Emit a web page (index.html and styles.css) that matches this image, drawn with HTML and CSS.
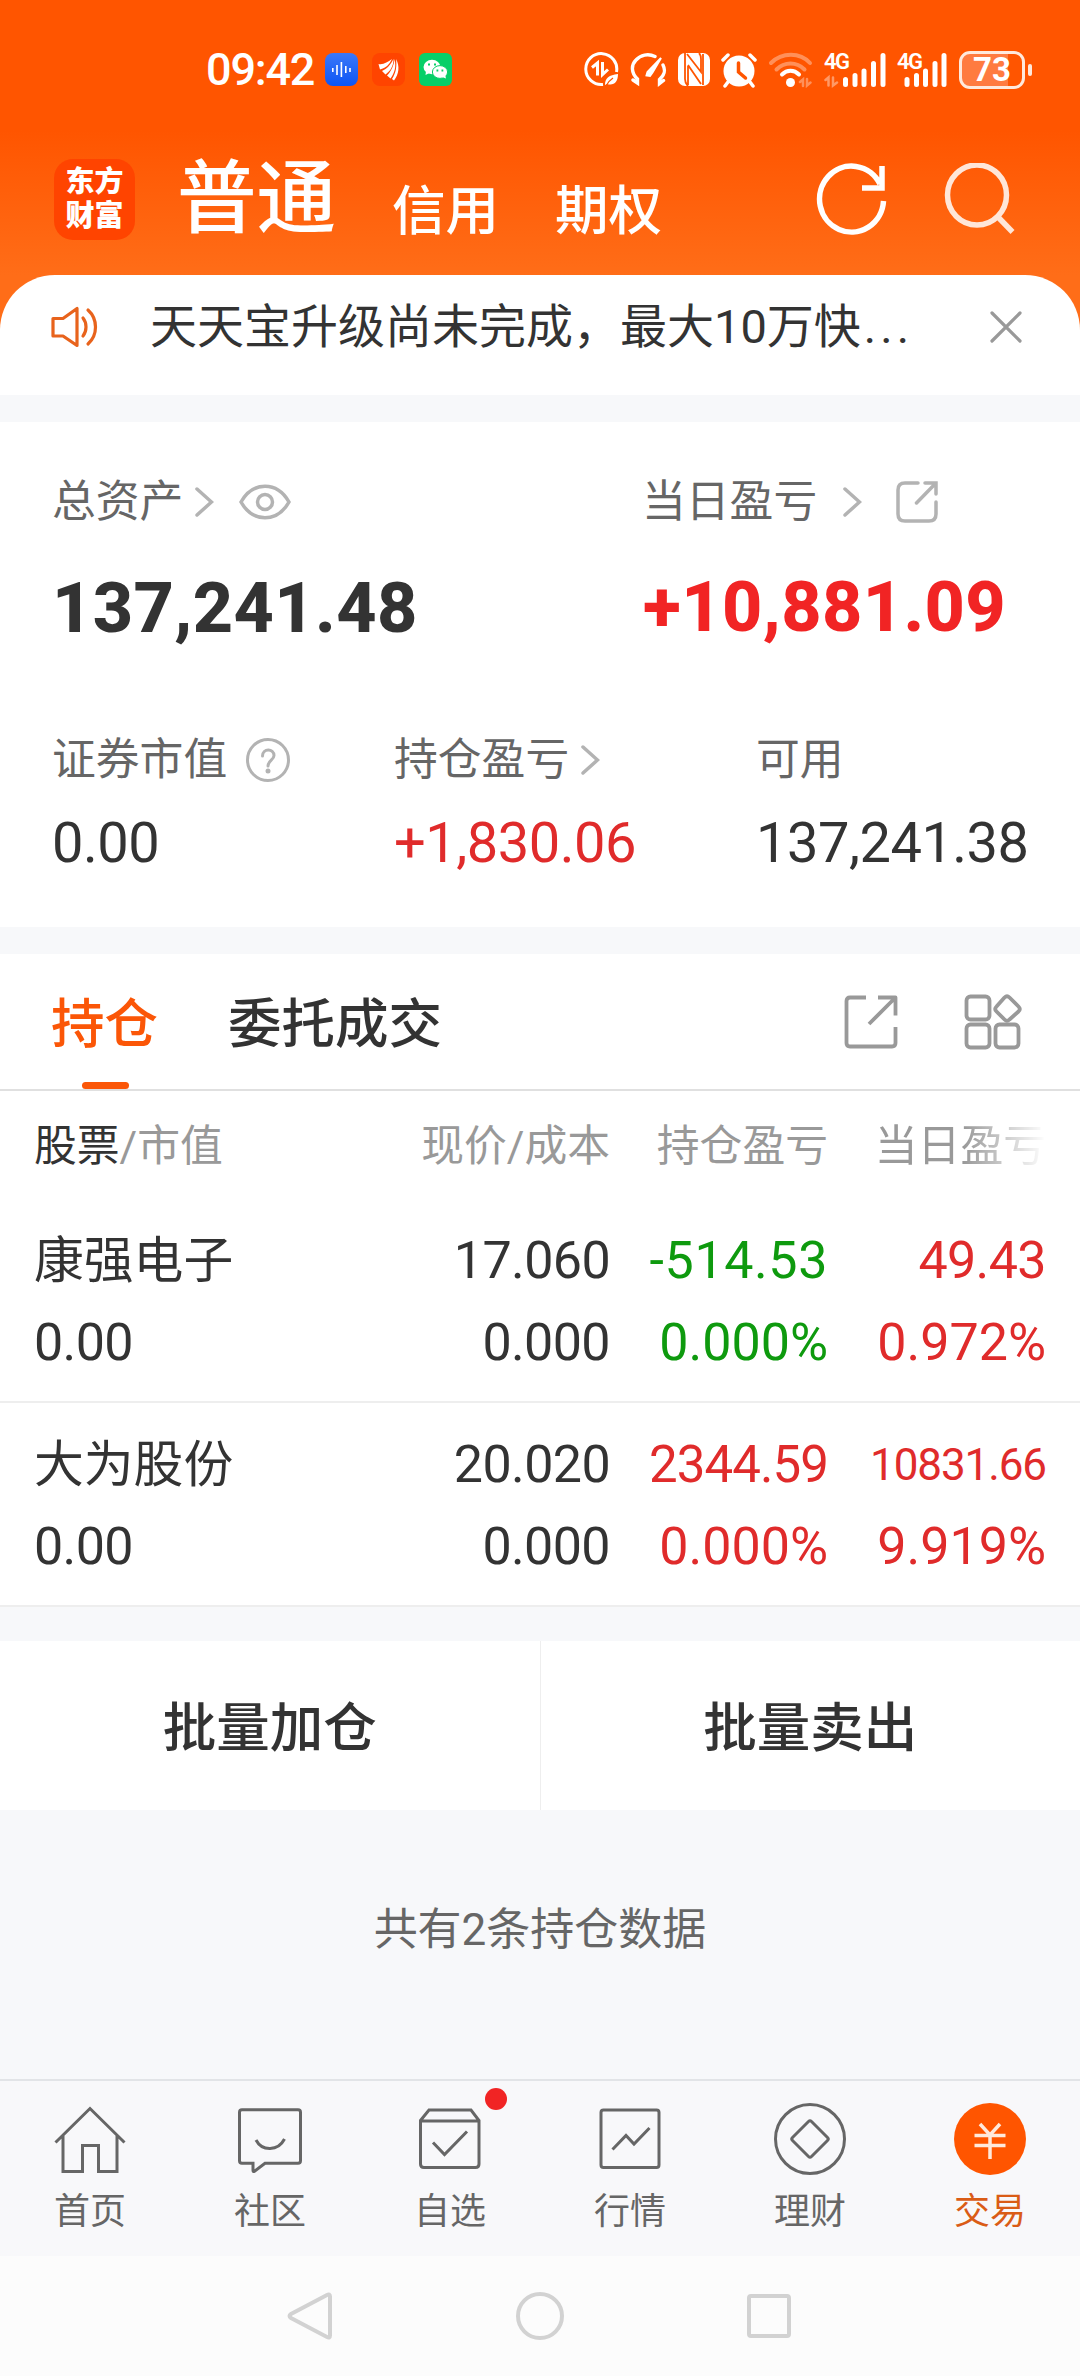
FILE: index.html
```html
<!DOCTYPE html>
<html lang="zh-CN">
<head>
	<meta charset="UTF-8">
	<title>交易</title>
	<link rel="stylesheet" href="styles.css">
</head>
<body>
	<div class="header">
		<div class="status">
			<span class="time">09:42</span>
			<div class="apps">
				<svg width="33" height="33" viewBox="0 0 33 33">
					<defs><linearGradient id="blue" x1="0" y1="0" x2="0" y2="1"><stop offset="0" stop-color="#3b78f8"/><stop offset="1" stop-color="#0c55f5"/></linearGradient></defs>
					<rect width="33" height="33" rx="8" fill="url(#blue)"/>
					<path d="M7.8 15v4M12 12v10M16.4 9v15M20.8 13v7M25 15v4" stroke="#fff" stroke-width="1.6"/>
				</svg>
				<svg width="33" height="33" viewBox="0 0 33 33">
					<rect width="33" height="33" rx="8" fill="#ff4400"/>
					<path d="M6.500 11c5 1 9-2 13.500-5-3 6-6 9-12 10.500zM10 18c5-2 9-7 11.500-12 0 7-3 12-8 15.500zM15 22.500c4-4 7-10 7.500-16.500 2 8 0 14-4 19.500zM20 26c4-6 5-13 4-20 4 7 3 15-2 21.500z" fill="#fff"/>
				</svg>
				<svg width="33" height="33" viewBox="0 0 33 33">
					<rect width="33" height="33" rx="6" fill="#07cf68"/>
					<ellipse cx="13" cy="14" rx="8.5" ry="7.2" fill="#fff"/>
					<path d="M7 18l-.5 4 4-2z" fill="#fff"/>
					<ellipse cx="21" cy="19" rx="7.6" ry="6.4" fill="#fff" stroke="#07cf68" stroke-width="1"/>
					<path d="M23 24l4 1.500-1-4z" fill="#fff"/>
					<path d="M9 11.500h2M15 11.500h2M17.500 17.500h1.800M22.500 17.500h1.800" stroke="#07cf68" stroke-width="2"/>
				</svg>
			</div>
			<div class="sys">
				<svg width="35" height="35" viewBox="0 0 35 35" fill="none" stroke="#fff" stroke-width="3">
					<path d="M19 32.500A15.500 15.500 0 1 1 32.500 20"/>
					<path d="M8 15.500l5.500-4.500v12.500M18.500 10v12.500l5.500-5" stroke-width="3"/>
					<path d="M21 33c0-7 4-10 13-11 0 8-4 12-11 10z" fill="#fff" stroke="none"/>
					<path d="M22 34c2-4 4-6 7-8" stroke="#ff5500" stroke-width="1.300"/>
				</svg>
				<svg width="37" height="35" viewBox="0 0 37 35" fill="none" stroke="#fff" stroke-width="3.400" stroke-linecap="round">
					<path d="M3 28l4.500 3v-4C1 21 1 13 6 8 10.500 3 18 1 25 4.500M33 13c3 6 1.500 10-3.500 14.500v4l4-3"/>
					<path d="M31 6L17.500 20l-1 3.500 3.500.5 2.500-3.500z" fill="#fff" stroke-width="2"/>
				</svg>
				<svg width="32" height="33" viewBox="0 0 32 33">
					<rect x="0" y="0" width="32" height="33" rx="7" fill="#fff"/>
					<path d="M7 0v26q0 4 3 7M10 13v19M10 12l13 19M9 1l14 18V6q0-4-2-6M25 1v31" fill="none" stroke="#ff5500" stroke-width="1.800"/>
				</svg>
				<svg width="36" height="36" viewBox="0 0 36 36" fill="none" stroke="#fff" stroke-width="3.500" stroke-linecap="round">
					<circle cx="18" cy="19" r="15.500" fill="#fff" stroke="none"/>
					<path d="M2 8l5-5M34 8l-5-5M7 30l-3 4M29 30l3 4"/>
					<path d="M17.500 11v9l7 6" stroke="#ff5500"/>
				</svg>
				<svg class="wifi" width="46" height="36" viewBox="0 0 46 36" fill="none" stroke="#fff" stroke-width="4" stroke-linecap="round">
					<path d="M3 11c11-11 29-11 39 0M8.500 17.500c8-8 20-8 28 0" opacity=".35"/>
					<path d="M14 22.500c5-5 12-5 17 0"/>
					<circle cx="22.500" cy="30.500" r="4.500" fill="#fff" stroke="none"/>
					<path d="M32 30l3-2.500v6.500M39 27v6.500l3.500-3" opacity=".35" stroke-width="2.500"/>
				</svg>
				<div class="signal">
					<span class="net">4G</span>
					<svg width="62" height="36" viewBox="0 0 62 36" fill="none" stroke="#fff" stroke-width="5" stroke-linecap="round">
						<path d="M21.500 27.500v5M31 23.500v9M40 19v13.500M49.500 11.500v21M59 3.500v29"/>
						<path d="M1.500 28l3-2.500v8M9 25.500v8l4-3" opacity=".4" stroke-width="2.500"/>
					</svg>
				</div>
				<div class="signal">
					<span class="net">4G</span>
					<svg width="50" height="36" viewBox="0 0 50 36" fill="none" stroke="#fff" stroke-width="5" stroke-linecap="round">
						<path d="M10 27.500v5M19.500 23.500v9M28.500 19v13.500M38 11.500v21M47 3.500v29"/>
					</svg>
				</div>
				<div class="battery"><span>73</span></div>
			</div>
		</div>
		<div class="nav">
			<div class="logo">东方<br>财富</div>
			<span class="nav-on">普通</span>
			<span class="nav-item">信用</span>
			<span class="nav-item">期权</span>
			<svg class="refresh" width="72" height="72" viewBox="0 0 72 72" fill="none" stroke="#fff" stroke-width="5.500">
				<path d="M67.500 38A32 33 0 1 1 64 21M66 3v22H46"/>
			</svg>
			<svg width="72" height="72" viewBox="0 0 72 72" fill="none" stroke="#ffe6d8" stroke-width="5.500">
				<ellipse cx="33" cy="32" rx="29.500" ry="30"/>
				<path d="M53 53l15.500 16"/>
			</svg>
		</div>
	</div>

	<div class="notice">
		<svg width="48" height="42" viewBox="0 0 48 42" fill="none" stroke="#e8631c" stroke-width="3.200" stroke-linejoin="round" stroke-linecap="round">
			<path d="M2 12.500h10L26 2.500v37L12 30H2zM26 3v36M32 12c4 5 4 13 0 18M37 4c10 9 10 25 0 34"/>
		</svg>
		<p>天天宝升级尚未完成，最大10万快<span class="more">...</span></p>
		<svg class="close" width="32" height="32" viewBox="0 0 32 32" fill="none" stroke="#999" stroke-width="3.200" stroke-linecap="round">
			<path d="M2 2l28 28M30 2L2 30"/>
		</svg>
	</div>

	<div class="assets">
		<div class="total">
			<div class="item">
				<div class="label">总资产
					<svg class="arrow" width="19" height="30" viewBox="0 0 19 30"><path d="M2 2l14.500 13L2 28"/></svg>
					<svg class="eye" width="52" height="36" viewBox="0 0 52 36"><path d="M2 18C14-3 38-3 50 18 38 39 14 39 2 18z"/><circle cx="26" cy="18" r="7.500"/></svg>
				</div>
				<div class="big">137,241.48</div>
			</div>
			<div class="item">
				<div class="label">当日盈亏
					<svg class="arrow far" width="19" height="30" viewBox="0 0 19 30"><path d="M2 2l14.500 13L2 28"/></svg>
					<svg class="share" width="42" height="42" viewBox="0 0 42 42"><path d="M22 2H9Q2 2 2 9v24q0 7 7 7h24q7 0 7-7V21M29 2h11v11M39 3L20.500 22"/></svg>
				</div>
				<div class="big red">+10,881.09</div>
			</div>
		</div>
		<div class="detail">
			<div class="item">
				<div class="label">证券市值
					<svg class="ask" width="44" height="44" viewBox="0 0 44 44"><circle cx="22" cy="22" r="20.500"/><path d="M16.500 18c0-8 11.500-8 11.500-.5 0 4.500-6 5-6 10.500"/><circle class="dot" cx="22" cy="33" r="2.500"/></svg>
				</div>
				<div class="num">0.00</div>
			</div>
			<div class="item">
				<div class="label">持仓盈亏
					<svg class="arrow" width="19" height="30" viewBox="0 0 19 30"><path d="M2 2l14.500 13L2 28"/></svg>
				</div>
				<div class="num red">+1,830.06</div>
			</div>
			<div class="item">
				<div class="label">可用</div>
				<div class="num">137,241.38</div>
			</div>
		</div>
	</div>

	<div class="tabs">
		<span class="tab on">持仓</span>
		<span class="tab">委托成交</span>
		<svg class="tool-share" width="54" height="54" viewBox="0 0 54 54"><path d="M22 2.500H6q-3.500 0-3.500 3.500v42q0 3.500 3.500 3.500h42q3.500 0 3.500-3.500V32M34 2.500h17.500v18M51 3L25 29"/></svg>
		<svg width="58" height="56" viewBox="0 0 58 56"><rect x="2.500" y="2.500" width="23" height="23" rx="4"/><rect x="2.500" y="30.500" width="23" height="23" rx="4"/><rect x="31.500" y="30.500" width="23" height="23" rx="4"/><path d="M40.500 3.500q2.500-2.500 5 0l9 9q2.500 2.500 0 5l-9 8q-2.500 2.500-5 0l-8-8q-2.500-2.500 0-5z"/></svg>
	</div>

	<div class="list">
		<div class="row thead">
			<span><b>股票</b>/市值</span>
			<span>现价/成本</span>
			<span>持仓盈亏</span>
			<span class="fade">当日盈亏</span>
		</div>
		<div class="row">
			<span class="name">康强电子</span>
			<span>17.060</span>
			<span class="green minus">-514.53</span>
			<span class="red">49.43</span>
			<span>0.00</span>
			<span>0.000</span>
			<span class="green rate">0.000%</span>
			<span class="red rate">0.972%</span>
		</div>
		<div class="row">
			<span class="name">大为股份</span>
			<span>20.020</span>
			<span class="red long">2344.59</span>
			<span class="red small">10831.66</span>
			<span>0.00</span>
			<span>0.000</span>
			<span class="red rate">0.000%</span>
			<span class="red rate">9.919%</span>
		</div>
	</div>

	<div class="batch">
		<div>批量加仓</div>
		<div>批量卖出</div>
	</div>

	<div class="tip">共有2条持仓数据</div>

	<div class="tabbar">
		<div class="bar-item">
			<svg width="72" height="72" viewBox="0 0 72 72"><path d="M1.500 39.500L36 5.500l34.500 34M9 32v36.500h19.500v-26h16v26H63V32"/></svg>
			<span>首页</span>
		</div>
		<div class="bar-item">
			<svg width="72" height="72" viewBox="0 0 72 72"><path d="M8 6.700h56q2.500 0 2.500 2.500v48.500q0 2.500-2.500 2.500H31l-10.500 8q-1.500 1-1.500-1v-7H8q-2.500 0-2.500-2.500V9.200Q5.500 6.700 8 6.700zM22 37c6 11.500 22 11.500 28.500-1"/></svg>
			<span>社区</span>
		</div>
		<div class="bar-item">
			<svg width="72" height="72" viewBox="0 0 72 72"><path d="M6.500 17.500L15 7h42l8 10.500V61q0 3.500-3.500 3.500H10q-3.500 0-3.500-3.500zM6.500 18H65M19 39.500l11.500 12 22.500-23"/></svg>
			<span>自选</span>
			<i class="badge"></i>
		</div>
		<div class="bar-item">
			<svg width="72" height="72" viewBox="0 0 72 72"><rect x="7" y="7" width="58" height="57.500" rx="2.500"/><path d="M18.500 46.500L32 32.500l8 8.500 15.500-16"/></svg>
			<span>行情</span>
		</div>
		<div class="bar-item">
			<svg width="72" height="72" viewBox="0 0 72 72"><circle cx="36" cy="36" r="34.500"/><path d="M34.500 18.500q1.500-1.500 3 0l16 16q1.500 1.500 0 3l-16 16q-1.500 1.500-3 0l-16-16q-1.500-1.500 0-3z"/></svg>
			<span>理财</span>
		</div>
		<div class="bar-item on">
			<svg width="72" height="72" viewBox="0 0 72 72"><circle cx="36" cy="36" r="36"/><path d="M26 21l10 11 10-11M20.500 32.500h31M20.500 42.500h31M36 32v24"/></svg>
			<span>交易</span>
		</div>
	</div>

	<div class="sysnav">
		<svg width="48" height="48" viewBox="0 0 48 48"><path d="M40 3q3-1.500 3 1.500v39q0 3-3 1.500L4 26q-3-2 0-4z"/></svg>
		<svg width="48" height="48" viewBox="0 0 48 48"><circle cx="24" cy="24" r="22"/></svg>
		<svg width="48" height="48" viewBox="0 0 48 48"><rect x="4" y="4" width="40" height="40" rx="2"/></svg>
	</div>
</body>
</html>
```
FILE: styles.css
```css
*{
	margin: 0;
	padding: 0;
	box-sizing: border-box;
}
body{
	width: 1080px;
	height: 2376px;
	display: flex;
	flex-direction: column;
	overflow: hidden;
	background: #f7f8fa;
	color: #333;
	font-family: Roboto,"Noto Sans CJK SC",sans-serif;
}
svg{
	display: block;
	flex: none;
}

/*顶部*/
.header{
	height: 335px;
	flex: none;
	background: linear-gradient(#ff5500 130px,#ff6d18 275px);
	color: #fff;
}
.status{
	height: 139px;
	padding: 0 47px 0 206px;
	display: flex;
	align-items: center;
}
.time{
	width: 119px;
	font-size: 45px;
	font-weight: 500;
	letter-spacing: -1.200px;
	white-space: nowrap;
}
.apps{
	display: flex;
	gap: 14px;
}
.sys{
	flex: 1;
	display: flex;
	align-items: center;
	padding-left: 132px;
}
.sys > svg,
.signal{
	margin-right: 11px;
}
.sys .wifi{
	margin-right: 10px;
}
.signal{
	position: relative;
	flex: none;
}
.net{
	position: absolute;
	left: 0;
	top: -3px;
	font-size: 22px;
	font-weight: 600;
	line-height: 26px;
	letter-spacing: -1.500px;
}
.battery{
	width: 66px;
	height: 38px;
	margin-left: 1px;
	flex: none;
	border: 3px solid #ffe9dc;
	border-radius: 11px;
	background: linear-gradient(90deg,#ff7b40 76%,transparent 76%);
	position: relative;
	line-height: 32px;
	text-align: center;
	font-size: 33px;
	font-weight: 700;
}
.battery::after{
	content: "";
	position: absolute;
	right: -10px;
	top: 10px;
	width: 4px;
	height: 12px;
	border-radius: 2px;
	background: #ffe9dc;
}
.nav{
	height: 120px;
	padding: 0 64px 0 54px;
	display: flex;
	align-items: center;
}
.logo{
	width: 81px;
	height: 81px;
	margin-right: 42px;
	padding-top: 6px;
	border-radius: 19px;
	background: #ff4400;
	font-size: 29px;
	font-weight: 900;
	line-height: 34px;
	text-align: center;
}
.nav-on{
	width: 215px;
	font-size: 79.500px;
	font-weight: 500;
	line-height: 80px;
}
.nav-item{
	width: 163px;
	padding-top: 26px;
	font-size: 53.500px;
	font-weight: 500;
	line-height: 56px;
}
.refresh{
	margin-left: auto;
	margin-right: 56px;
}

/*公告*/
.notice{
	height: 120px;
	margin-top: -60px;
	padding: 0 58px 16px 51px;
	flex: none;
	display: flex;
	align-items: center;
	border-radius: 55px 55px 0 0;
	background: #fff;
}
.notice p{
	margin-left: 51px;
	font-size: 47px;
	line-height: 60px;
	white-space: nowrap;
}
.more{
	margin-left: 3px;
	letter-spacing: 4px;
}
.close{
	margin-left: auto;
}

/*资产*/
.assets{
	height: 505px;
	margin-top: 27px;
	padding: 50px 0 0 52px;
	flex: none;
	background: #fff;
}
.total{
	display: grid;
	grid-template-columns: 590px 1fr;
}
.detail{
	margin-top: 79px;
	display: grid;
	grid-template-columns: 342px 362px 1fr;
}
.label{
	height: 60px;
	display: flex;
	align-items: center;
	line-height: 58px;
	font-size: 43.800px;
	color: #666;
}
.label svg{
	fill: none;
	stroke: #b3b3b3;
	stroke-width: 3.500px;
	stroke-linecap: round;
}
.label .arrow{
	margin-left: 12px;
}
.label .far{
	margin-left: 26px;
}
.label .eye{
	margin-left: 25px;
}
.label .share{
	margin-left: 34px;
}
.label .ask{
	margin-left: 19px;
	stroke-width: 3px;
}
.label .ask .dot{
	fill: #b3b3b3;
	stroke: none;
}
.big{
	margin-top: 34px;
	height: 85px;
	line-height: 84px;
	font-size: 70px;
	font-weight: 800;
	letter-spacing: .400px;
}
.big.red{
	padding-left: 1px;
	line-height: 82px;
	color: #f12424;
}
.num{
	margin-top: 18px;
	height: 70px;
	line-height: 70px;
	font-size: 56px;
	letter-spacing: -.500px;
}
.red{
	color: #e02b2b;
}
.green{
	color: #0e9a0e;
}

/*选项卡*/
.tabs{
	height: 137px;
	margin-top: 27px;
	padding: 0 58px 0 51px;
	flex: none;
	display: flex;
	align-items: center;
	border-bottom: 2px solid #e0e0e0;
	background: #fff;
}
.tab{
	height: 135px;
	margin-right: 70px;
	font-size: 53.500px;
	font-weight: 500;
	line-height: 142px;
	position: relative;
}
.tab.on{
	color: #fb5607;
}
.tab.on::after{
	content: "";
	position: absolute;
	left: 31px;
	bottom: 0;
	width: 47px;
	height: 7px;
	border-radius: 4px;
	background: #fb5607;
}
.tabs svg{
	fill: none;
	stroke: #999;
	stroke-width: 3.800px;
	stroke-linejoin: round;
}
.tool-share{
	margin-left: auto;
	margin-right: 66px;
}

/*持仓列表*/
.list{
	flex: none;
	background: #fff;
}
.row{
	height: 204px;
	padding: 21px 34px 0 34px;
	display: grid;
	grid-template-columns: 276px 300px 218px 218px;
	grid-auto-rows: 82px;
	border-bottom: 2px solid #eee;
	line-height: 82px;
	font-size: 52px;
	letter-spacing: -.600px;
	text-align: right;
	white-space: nowrap;
}
.row span:nth-child(4n+1){
	text-align: left;
}
.row .name{
	font-size: 49.800px;
	letter-spacing: 0;
}
.row .minus{
	letter-spacing: .600px;
}
.row .rate{
	letter-spacing: 0;
}
.row .long{
	font-size: 51px;
	letter-spacing: -.900px;
}
.row .small{
	font-size: 44px;
	letter-spacing: -1.100px;
}
.row.thead{
	height: 108px;
	padding-top: 14px;
	border: none;
	font-size: 42.800px;
	letter-spacing: 0;
	color: #999;
}
.thead b{
	font-weight: 400;
	color: #333;
}
.fade{
	-webkit-mask-image: linear-gradient(90deg,#000 62%,transparent 100%);
	mask-image: linear-gradient(90deg,#000 62%,transparent 100%);
}

/*批量操作*/
.batch{
	height: 169px;
	margin-top: 34px;
	flex: none;
	display: flex;
	background: #fff;
}
.batch div{
	flex: 1;
	line-height: 175px;
	text-align: center;
	font-size: 53.500px;
	font-weight: 500;
}
.batch div:first-child{
	border-right: 1px solid #eee;
}
.tip{
	flex: 1;
	padding-top: 90px;
	line-height: 60px;
	text-align: center;
	font-size: 44px;
	color: #666;
}

/*底部导航*/
.tabbar{
	height: 177px;
	flex: none;
	display: flex;
	border-top: 2px solid #e2e4e7;
	background: #f8f8fa;
}
.bar-item{
	flex: 1;
	padding-top: 22px;
	display: flex;
	flex-direction: column;
	align-items: center;
	position: relative;
	font-size: 36px;
	line-height: 75px;
	color: #666;
}
.bar-item svg{
	fill: none;
	stroke: #666;
	stroke-width: 3px;
}
.bar-item.on{
	color: #da5c16;
}
.bar-item.on circle{
	fill: #ff5500;
	stroke: none;
}
.bar-item.on path{
	stroke: #ffe9dc;
	stroke-width: 3.500px;
}
.badge{
	position: absolute;
	left: 125px;
	top: 7px;
	width: 22px;
	height: 22px;
	border-radius: 50%;
	background: #f12424;
}
.sysnav{
	height: 120px;
	flex: none;
	display: flex;
	justify-content: center;
	align-items: center;
	gap: 181px;
	background: #fcfcfc;
}
.sysnav svg{
	fill: none;
	stroke: #d2d2d2;
	stroke-width: 4px;
}
```
